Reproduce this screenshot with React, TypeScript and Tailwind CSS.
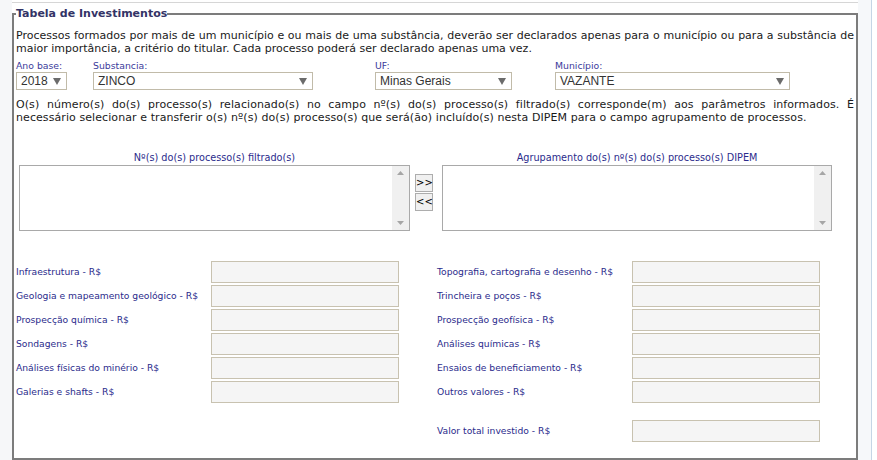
import React from 'react'

const leftFields = [
    'Infraestrutura - R$',
    'Geologia e mapeamento geológico - R$',
    'Prospecção química - R$',
    'Sondagens - R$',
    'Análises físicas do minério - R$',
    'Galerias e shafts - R$',
]

const rightFields = [
    'Topografia, cartografia e desenho - R$',
    'Trincheira e poços - R$',
    'Prospecção geofísica - R$',
    'Análises químicas - R$',
    'Ensaios de beneficiamento - R$',
    'Outros valores - R$',
]

function Arrow() {
    return (
        <svg width="8" height="7" viewBox="0 0 8 7" className="shrink-0">
            <polygon points="0,0 8,0 4,7" fill="#6b6b6b" />
        </svg>
    )
}

function Select({ value, width }: { value: string; width: string }) {
    return (
        <div className={`${width} h-[18px] flex items-center justify-between border border-[#c1bba9] bg-white pl-[4px] pr-[5px] font-['Liberation_Sans',sans-serif] text-[12px] text-[#333]`}>
            <span>{value}</span>
            <Arrow />
        </div>
    )
}

function ListBox({ caption, width }: { caption: string; width: string }) {
    return (
        <div className={`${width} flex flex-col`}>
            <div className="text-center text-[9.7px] leading-[12px] text-[#2b2b8c]">{caption}</div>
            <div className="mt-[1px] h-[66px] flex border border-[#a9a9a9] bg-white">
                <div className="flex-1" />
                <div className="w-[17px] flex flex-col justify-between items-center bg-[#f0f0f0] py-[5px]">
                    <svg width="7" height="4" viewBox="0 0 7 4">
                        <polygon points="0,4 7,4 3.5,0" fill="#a6a6a6" />
                    </svg>
                    <svg width="7" height="4" viewBox="0 0 7 4">
                        <polygon points="0,0 7,0 3.5,4" fill="#a6a6a6" />
                    </svg>
                </div>
            </div>
        </div>
    )
}

function Field({ label }: { label: string }) {
    return (
        <div className="flex items-center">
            <div className="w-[195px] text-[9.2px] text-[#2b2b8c] whitespace-nowrap">{label}</div>
            <div className="w-[188px] h-[22px] border border-[#c8c2b0] bg-[#f5f5f5]" />
        </div>
    )
}

export default function App() {
    return (
        <div className="flex min-h-[460px] bg-white font-['DejaVu_Sans',sans-serif] overflow-hidden">
            <div className="w-[12px] shrink-0 bg-[#f6f7f9]" />

            <div className="w-[846px] shrink-0 flex flex-col">
                <div className="h-[3px] border-b border-[#d6d6d6]" />
                <fieldset className="mt-[4px] flex-1 border-2 border-[#7c7c7c] px-[2px] pb-4">
                    <legend className="text-[11px] font-bold leading-[14px] text-[#333366]">Tabela de Investimentos</legend>

                    <p className="mt-[8px] text-[11px] leading-[13px] text-justify text-[#1a1a1a]">
                        Processos formados por mais de um município e ou mais de uma substância, deverão ser declarados apenas para o município ou para a substância de maior importância, a critério do titular. Cada processo poderá ser declarado apenas uma vez.
                    </p>

                    {/* Filtros */}
                    <div className="mt-[5px] flex">
                        <div className="w-[77px]">
                            <div className="text-[9.3px] leading-[12px] text-[#3b3b9b]">Ano base:</div>
                            <Select value="2018" width="w-[51px]" />
                        </div>
                        <div className="w-[282px]">
                            <div className="text-[9.3px] leading-[12px] text-[#3b3b9b]">Substancia:</div>
                            <Select value="ZINCO" width="w-[220px]" />
                        </div>
                        <div className="w-[180px]">
                            <div className="text-[9.3px] leading-[12px] text-[#3b3b9b]">UF:</div>
                            <Select value="Minas Gerais" width="w-[137px]" />
                        </div>
                        <div>
                            <div className="text-[9.3px] leading-[12px] text-[#3b3b9b]">Município:</div>
                            <Select value="VAZANTE" width="w-[235px]" />
                        </div>
                    </div>

                    <p className="mt-[8px] text-[11px] leading-[13px] tracking-[0.08px] text-justify text-[#1a1a1a]">
                        O(s) número(s) do(s) processo(s) relacionado(s) no campo nº(s) do(s) processo(s) filtrado(s) corresponde(m) aos parâmetros informados. É necessário selecionar e transferir o(s) nº(s) do(s) processo(s) que será(ão) incluído(s) nesta DIPEM para o campo agrupamento de processos.
                    </p>

                    {/* Processos */}
                    <div className="mt-[28px] flex pl-[3px]">
                        <ListBox caption="Nº(s) do(s) processo(s) filtrado(s)" width="w-[391px]" />
                        <div className="ml-[5px] mt-[22px] flex flex-col gap-[1px]">
                            <button className="w-[18px] h-[18px] border border-[#adadad] bg-[#f0f0f0] text-[10px] leading-none text-black">&gt;&gt;</button>
                            <button className="w-[18px] h-[18px] border border-[#adadad] bg-[#f0f0f0] text-[10px] leading-none text-black">&lt;&lt;</button>
                        </div>
                        <div className="ml-[9px]">
                            <ListBox caption="Agrupamento do(s) nº(s) do(s) processo(s) DIPEM" width="w-[390px]" />
                        </div>
                    </div>

                    {/* Valores */}
                    <div className="mt-[30px] flex flex-col gap-[2px]">
                        {leftFields.map((label, i) => (
                            <div key={label} className="flex">
                                <Field label={label} />
                                <div className="ml-[38px]">
                                    <Field label={rightFields[i]} />
                                </div>
                            </div>
                        ))}
                        <div className="mt-[15px] ml-[421px]">
                            <Field label="Valor total investido - R$" />
                        </div>
                    </div>
                </fieldset>
            </div>

            <div className="w-[14px] shrink-0 bg-[#f6f8fa] border-r border-[#c5d5e5]" />
            <div className="flex-1 bg-white" />
        </div>
    )
}
